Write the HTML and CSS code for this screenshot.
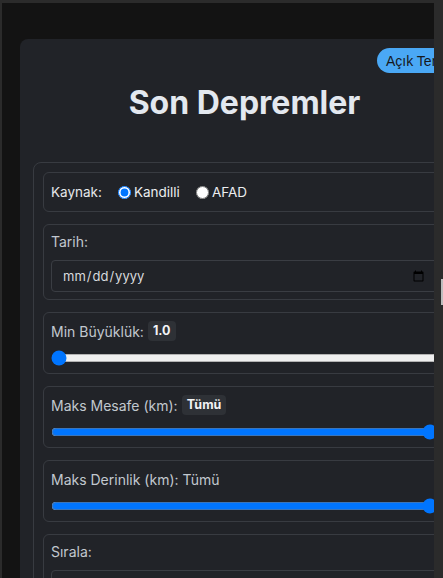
FILE: index.html
```html
<!DOCTYPE html>
<html lang="tr">
<head>
<meta charset="utf-8">
<title>Son Depremler</title>
<link rel="stylesheet" href="styles.css">
</head>
<body>
<div class="frame">
  <div class="viewport">
    <div class="card">
      <button class="theme-btn" type="button">Açık Tema</button>
      <h1 class="title">Son Depremler</h1>
      <div class="filters">
        <div class="section">
          <div class="source-row">
            <span class="label">Kaynak:</span>
            <label class="opt"><input type="radio" name="src" checked> Kandilli</label>
            <label class="opt"><input type="radio" name="src"> AFAD</label>
          </div>
        </div>
        <div class="section">
          <div class="label date-label">Tarih:</div>
          <input class="date" type="date">
        </div>
        <div class="section">
          <div class="label-row"><span class="label">Min Büyüklük:</span><span class="badge">1.0</span></div>
          <input class="range" type="range" min="1" max="9" step="0.1" value="1">
        </div>
        <div class="section">
          <div class="label-row"><span class="label">Maks Mesafe (km):</span><span class="badge">Tümü</span></div>
          <input class="range" type="range" min="0" max="1000" value="1000">
        </div>
        <div class="section">
          <div class="label-row"><span class="label">Maks Derinlik (km): Tümü</span></div>
          <input class="range" type="range" min="0" max="100" value="100">
        </div>
        <div class="section">
          <div class="label date-label">Sırala:</div>
          <select class="select"><option>Tarihe göre (yeni)</option></select>
        </div>
      </div>
    </div>
  </div>
  <div class="rail"><div class="thumb"></div></div>
</div>
</body>
</html>
```
FILE: styles.css
```css
html, body {
  margin: 0;
  padding: 0;
}
body {
  font-family: Inter, "Liberation Sans", Arial, sans-serif;
  background: #2b2b2b;
}
.frame {
  display: flex;
  height: 578px;
  padding: 3px 0 0 2px;
  box-sizing: border-box;
  background: #2b2b2b;
  overflow: hidden;
}
.viewport {
  flex: 0 0 432px;
  background: #131313;
  overflow: hidden;
  padding: 36px 0 0 18px;
  box-sizing: border-box;
}
.rail {
  flex: 0 0 9px;
  background: #2b2b2b;
}
.thumb {
  margin: 276px 0 0 7px;
  width: 2px;
  height: 26px;
  background: #bdbdbd;
}
.card {
  position: relative;
  width: 449px;
  box-sizing: border-box;
  background: #212328;
  border-radius: 8px;
  padding: 44px 13px 20px;
}
.theme-btn {
  position: absolute;
  top: 9px;
  left: 357px;
  height: 25px;
  padding: 0 9px;
  border: none;
  border-radius: 13px;
  background: #4aa8f5;
  color: #16191d;
  font-family: "Liberation Sans", Arial, sans-serif;
  font-size: 14px;
  white-space: nowrap;
}
.title {
  margin: 0 0 39px;
  text-align: center;
  font-size: 32px;
  line-height: 40px;
  font-weight: 700;
  color: #e3e8ef;
}
.filters {
  border: 1px solid #383b41;
  border-radius: 8px;
  padding: 9px;
  display: flex;
  flex-direction: column;
  gap: 12px;
}
.section {
  border: 1px solid #383b41;
  border-radius: 6px;
  padding: 7px;
  display: flex;
  flex-direction: column;
}
.label {
  font-size: 14px;
  color: #c2c8cf;
}
.source-row {
  display: flex;
  align-items: center;
  height: 22px;
  margin: 1px 0 1px;
  gap: 16px;
}
.source-row .label {
  color: #e6e8eb;
  font-size: 13.5px;
}
.opt {
  display: flex;
  align-items: center;
  gap: 3px;
  font-size: 13.5px;
  color: #eceef0;
}
.opt input {
  margin: 0;
  width: 13px;
  height: 13px;
}
.date-label {
  line-height: 20px;
  margin-bottom: 8px;
}
.date {
  height: 32px;
  box-sizing: border-box;
  border: 1px solid #3a3d43;
  border-radius: 4px;
  background: transparent;
  color: #d8dadd;
  padding: 0 10px;
  font-family: inherit;
  font-size: 13px;
}
.label-row {
  display: flex;
  align-items: center;
  gap: 4px;
  height: 22px;
}
.badge {
  background: #2e3136;
  color: #f2f3f5;
  font-weight: 700;
  font-size: 12.5px;
  padding: 0 5px;
  height: 20px;
  line-height: 20px;
  border-radius: 4px;
}
.range {
  margin: 8px 0 0;
  width: 100%;
  height: 16px;
}
.select {
  height: 32px;
  background: transparent;
  border: 1px solid #3a3d43;
  border-radius: 4px;
  color: #d8dadd;
}
```
